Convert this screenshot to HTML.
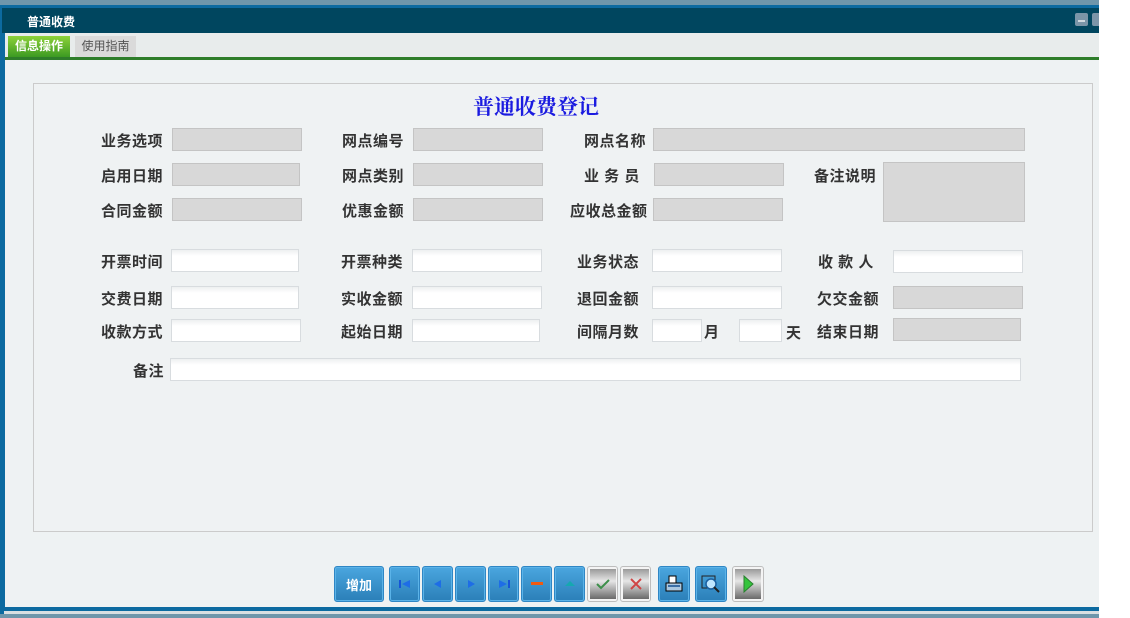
<!DOCTYPE html>
<html><head><meta charset="utf-8"><style>
*{margin:0;padding:0;box-sizing:border-box}
body{width:1130px;height:618px;position:relative;background:#fff;font-family:"Liberation Sans","Noto Sans CJK SC",sans-serif;overflow:hidden}
.a{position:absolute}
.lb{position:absolute;font-size:15px;letter-spacing:0.5px;font-weight:bold;color:#333;line-height:23px;white-space:nowrap}
.g{position:absolute;height:23px;background:#d8d8d8;border:1px solid #c4c4c4}
.w{position:absolute;height:23px;background:linear-gradient(#eef0f1,#fff 6px);border:1px solid #d8dcdf}
.bb{position:absolute;top:566px;height:36px;border-radius:3px;background:linear-gradient(#4aa6df,#2b7fb8);border:1px solid #2f86c4;box-shadow:inset 0 0 0 1px #5bb3e8;display:flex;align-items:center;justify-content:center}
.gb{position:absolute;top:566px;height:36px;border-radius:3px;border:1px solid #bdbdbd;background:#f4f4f4;display:flex;align-items:center;justify-content:center}
.gb span{display:flex;align-items:center;justify-content:center;width:26px;height:30px;background:linear-gradient(#9a9a9a,#e6e6e6 40%,#6a6a6a)}
</style></head><body>
<div class="a" style="left:0;top:0;width:1099px;height:7px;background:#6f96ab"></div>
<div class="a" style="left:0;top:5px;width:1099px;height:609px;background:#0c6aa0"></div>
<div class="a" style="left:2px;top:8px;width:1097px;height:25px;background:#00465f"></div>
<div class="a" style="left:27px;top:13px;font-size:12px;font-weight:bold;color:#fff">普通收费</div>
<div class="a" style="left:1075px;top:13px;width:13px;height:13px;background:#7b95a8;border-radius:2px"></div>
<div class="a" style="left:1078px;top:20px;width:7px;height:2px;background:#cfd8de"></div>
<div class="a" style="left:1092px;top:13px;width:7px;height:13px;background:#7b95a8;border-radius:2px 0 0 2px"></div>
<div class="a" style="left:5px;top:33px;width:1094px;height:574px;background:#eef2f3"></div>
<div class="a" style="left:5px;top:33px;width:1094px;height:24px;background:#e8ecec"></div>
<div class="a" style="left:8px;top:36px;width:62px;height:21px;background:linear-gradient(#8ed23a,#3c9a22);color:#fff;font-size:12px;font-weight:bold;text-align:center;line-height:21px">信息操作</div>
<div class="a" style="left:75px;top:36px;width:61px;height:21px;background:#dadada;color:#555;font-size:12px;text-align:center;line-height:21px">使用指南</div>
<div class="a" style="left:5px;top:57px;width:1094px;height:3px;background:#2e7d2a"></div>
<div class="a" style="left:33px;top:83px;width:1060px;height:449px;border:1px solid #cbcbcb;background:#eff2f3"></div>
<div class="a" style="left:473px;top:91px;font-size:21px;font-weight:bold;color:#1b1be0;font-family:'Liberation Serif','Noto Serif CJK SC',serif">普通收费登记</div>

<div class="lb" style="left:101px;top:130px">业务选项</div><div class="g" style="left:172px;top:128px;width:130px"></div>
<div class="lb" style="left:342px;top:130px">网点编号</div><div class="g" style="left:413px;top:128px;width:130px"></div>
<div class="lb" style="left:584px;top:130px">网点名称</div><div class="g" style="left:653px;top:128px;width:372px"></div>

<div class="lb" style="left:101px;top:165px">启用日期</div><div class="g" style="left:172px;top:163px;width:128px"></div>
<div class="lb" style="left:342px;top:165px">网点类别</div><div class="g" style="left:413px;top:163px;width:130px"></div>
<div class="lb" style="left:584px;top:165px">业 务 员</div><div class="g" style="left:654px;top:163px;width:130px"></div>
<div class="lb" style="left:814px;top:165px">备注说明</div><div class="g" style="left:883px;top:162px;width:142px;height:60px"></div>

<div class="lb" style="left:101px;top:200px">合同金额</div><div class="g" style="left:172px;top:198px;width:130px"></div>
<div class="lb" style="left:342px;top:200px">优惠金额</div><div class="g" style="left:413px;top:198px;width:130px"></div>
<div class="lb" style="left:570px;top:200px">应收总金额</div><div class="g" style="left:653px;top:198px;width:130px"></div>

<div class="lb" style="left:101px;top:251px">开票时间</div><div class="w" style="left:171px;top:249px;width:128px"></div>
<div class="lb" style="left:341px;top:251px">开票种类</div><div class="w" style="left:412px;top:249px;width:130px"></div>
<div class="lb" style="left:577px;top:251px">业务状态</div><div class="w" style="left:652px;top:249px;width:130px"></div>
<div class="lb" style="left:818px;top:251px">收 款 人</div><div class="w" style="left:893px;top:250px;width:130px"></div>

<div class="lb" style="left:101px;top:288px">交费日期</div><div class="w" style="left:171px;top:286px;width:128px"></div>
<div class="lb" style="left:341px;top:288px">实收金额</div><div class="w" style="left:412px;top:286px;width:130px"></div>
<div class="lb" style="left:577px;top:288px">退回金额</div><div class="w" style="left:652px;top:286px;width:130px"></div>
<div class="lb" style="left:817px;top:288px">欠交金额</div><div class="g" style="left:893px;top:286px;width:130px"></div>

<div class="lb" style="left:101px;top:321px">收款方式</div><div class="w" style="left:171px;top:319px;width:130px"></div>
<div class="lb" style="left:341px;top:321px">起始日期</div><div class="w" style="left:412px;top:319px;width:128px"></div>
<div class="lb" style="left:577px;top:321px">间隔月数</div><div class="w" style="left:652px;top:319px;width:50px"></div>
<div class="lb" style="left:704px;top:321px">月</div><div class="w" style="left:739px;top:319px;width:43px"></div>
<div class="lb" style="left:786px;top:322px">天</div>
<div class="lb" style="left:817px;top:321px">结束日期</div><div class="g" style="left:893px;top:318px;width:128px"></div>

<div class="lb" style="left:133px;top:360px">备注</div><div class="w" style="left:170px;top:358px;width:851px"></div>

<div class="bb" style="left:334px;width:50px;color:#fff;font-size:13px;font-weight:bold">增加</div>
<div class="bb" style="left:389px;width:31px"><svg width="14" height="10"><rect x="1" y="1" width="2" height="8" fill="#1555d8"/><path d="M12 1L4 5L12 9Z" fill="#1e6de6"/></svg></div>
<div class="bb" style="left:422px;width:31px"><svg width="10" height="10"><path d="M8 1L1 5L8 9Z" fill="#1e6de6"/></svg></div>
<div class="bb" style="left:455px;width:31px"><svg width="10" height="10"><path d="M2 1L9 5L2 9Z" fill="#1e6de6"/></svg></div>
<div class="bb" style="left:488px;width:31px"><svg width="14" height="10"><path d="M2 1L10 5L2 9Z" fill="#1e6de6"/><rect x="11" y="1" width="2" height="8" fill="#1555d8"/></svg></div>
<div class="bb" style="left:521px;width:31px"><svg width="14" height="6"><rect x="1" y="1" width="12" height="3" fill="#f05a10"/></svg></div>
<div class="bb" style="left:554px;width:31px"><svg width="12" height="8"><path d="M1 6L6 1L11 6Z" fill="#15a8b0"/></svg></div>
<div class="gb" style="left:587px;width:31px"><span><svg width="14" height="12"><path d="M1 6L5 10L13 2" stroke="#3d8f4a" stroke-width="2" fill="none"/></svg></span></div>
<div class="gb" style="left:620px;width:31px"><span><svg width="12" height="12"><path d="M1 1L11 11M11 1L1 11" stroke="#d04545" stroke-width="2"/></svg></span></div>
<div class="bb" style="left:658px;width:32px"><svg width="18" height="18"><rect x="4" y="1" width="7" height="7" fill="#fff" stroke="#000"/><rect x="1" y="8" width="16" height="8" fill="#aac8e0" stroke="#000"/><rect x="3" y="10" width="12" height="2" fill="#3a6ea5"/></svg></div>
<div class="bb" style="left:695px;width:32px"><svg width="20" height="20"><rect x="1" y="2" width="13" height="12" fill="none" stroke="#222"/><circle cx="10" cy="10" r="5" fill="#bfe6ff" stroke="#1a5fa0" stroke-width="1.5"/><path d="M13 13L18 18" stroke="#222" stroke-width="2"/></svg></div>
<div class="gb" style="left:732px;width:32px"><span><svg width="12" height="18"><path d="M2 1L11 9L2 17Z" fill="#35c43d" stroke="#2a7f30"/></svg></span></div>

<div class="a" style="left:0;top:607px;width:1099px;height:4px;background:#0c6aa0"></div>
<div class="a" style="left:4px;top:611px;width:1095px;height:3px;background:#d9dfe2"></div>
<div class="a" style="left:0;top:614px;width:1099px;height:4px;background:#6f96ab"></div>
</body></html>
